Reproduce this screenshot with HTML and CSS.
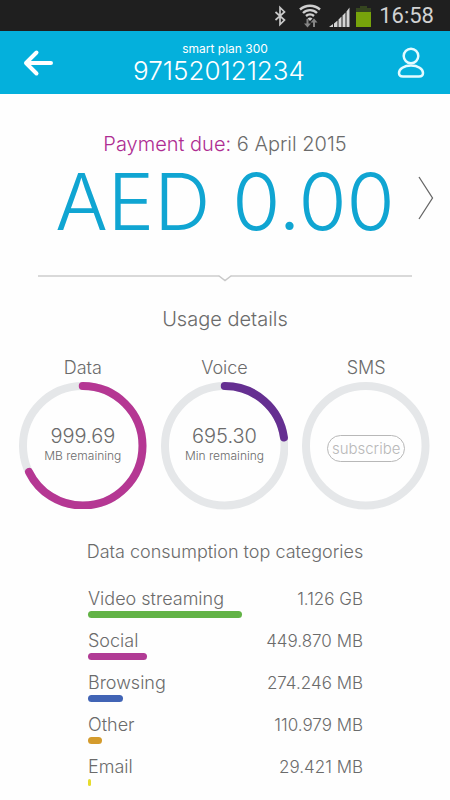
FILE: index.html
```html
<!DOCTYPE html>
<html lang="en">
<head>
<meta charset="utf-8">
<meta name="viewport" content="width=device-width, initial-scale=1">
<title>Account usage</title>
<link rel="stylesheet" href="styles.css">
</head>
<body>
<div class="status">
  <svg class="status-icons" width="102" height="26" viewBox="0 0 102 26" aria-hidden="true">
    <path d="M2.500 9l9 8-4.500 4.500V4.500L11.500 9l-9 8" fill="none" stroke="#c9c9c9" stroke-width="1.700"/>
    <g fill="none" stroke="#cfcfcf" stroke-width="2.400">
      <path d="M27 6.500a15 15 0 0 1 20 0"/>
      <path d="M30 10a10 10 0 0 1 14 0"/>
      <path d="M33 13a6 6 0 0 1 8 0"/>
    </g>
    <path d="M34.500 15.500a4 4 0 0 1 5 0L37 18z" fill="#cfcfcf"/>
    <path d="M34.500 16v6M41 24v-7" stroke="#858585" stroke-width="2"/>
    <path d="M31 20.500h7l-3.500 4zM37.500 19.500h7L41 15.500z" fill="#858585"/>
    <path d="M56 24l4-3v3zM61 20.500l3.500-3V24H61zM65.500 16.500l3-3V24h-3zM69.500 12.500l3-3V24h-3zM73.500 8.500l3-4V24h-3z" fill="#d4d4d4"/>
    <path d="M87 3h7v2h4v5H83V5h4z" fill="#35451f"/>
    <path d="M83 9h15v15H83z" fill="#77a30b"/>
  </svg>
  <time class="clock">16:58</time>
</div>
<header class="bar">
  <button class="icon-button" type="button" aria-label="Back">
    <svg width="30" height="28" viewBox="0 0 30 28" aria-hidden="true"><path d="M3 14h25M13.500 3.500L3 14l10.500 10.500" fill="none" stroke="#fff" stroke-width="4" stroke-linecap="round" stroke-linejoin="round"/></svg>
  </button>
  <div class="account">
    <p class="plan">smart plan 300</p>
    <h1 class="number">971520121234</h1>
  </div>
  <button class="icon-button" type="button" aria-label="Profile">
    <svg width="28" height="32" viewBox="0 0 28 32" fill="none" stroke="#e4fbff" stroke-width="2.500" aria-hidden="true"><circle cx="14" cy="9" r="7.300"/><path d="M14 18.500c-7 0-12 3.500-12 7.500 0 2.500 1 3.500 4 3.500h16c3 0 4-1 4-3.500 0-4-5-7.500-12-7.500z"/></svg>
  </button>
</header>
<main>
  <section class="payment">
    <p class="due"><span class="due-label">Payment due:</span> 6 April 2015</p>
    <div class="amount-row">
      <p class="amount">AED 0.00</p>
      <button class="next" type="button" aria-label="Payment details">
        <svg width="16" height="44" viewBox="0 0 16 44" aria-hidden="true"><path d="M1 1l13.500 21L1 43" fill="none" stroke="#666" stroke-width="1.300"/></svg>
      </button>
    </div>
  </section>
  <div class="divider" aria-hidden="true">
    <span class="rule"></span>
    <svg width="14" height="7" viewBox="0 0 14 7"><path d="M0 1h1l6 4.500L13 1h1" fill="none" stroke="#c9c9c9" stroke-width="1.500"/></svg>
    <span class="rule"></span>
  </div>
  <section>
    <h2 class="usage-title">Usage details</h2>
    <div class="gauges">
      <article class="gauge">
        <h3 class="gauge-title">Data</h3>
        <div class="ring">
          <svg class="ring-art" viewBox="0 0 128 128" aria-hidden="true">
            <circle class="track" cx="64" cy="64" r="60"/>
            <circle class="arc data" cx="64" cy="64" r="60" pathLength="360" stroke-dasharray="244 360"/>
          </svg>
          <div class="reading"><p class="value">999.69</p><p class="unit">MB remaining</p></div>
        </div>
      </article>
      <article class="gauge">
        <h3 class="gauge-title">Voice</h3>
        <div class="ring">
          <svg class="ring-art" viewBox="0 0 128 128" aria-hidden="true">
            <circle class="track" cx="64" cy="64" r="60"/>
            <circle class="arc voice" cx="64" cy="64" r="60" pathLength="360" stroke-dasharray="82 360"/>
          </svg>
          <div class="reading"><p class="value">695.30</p><p class="unit">Min remaining</p></div>
        </div>
      </article>
      <article class="gauge">
        <h3 class="gauge-title">SMS</h3>
        <div class="ring">
          <svg class="ring-art" viewBox="0 0 128 128" aria-hidden="true">
            <circle class="track" cx="64" cy="64" r="60"/>
          </svg>
          <button class="subscribe" type="button">subscribe</button>
        </div>
      </article>
    </div>
  </section>
  <section>
    <h2 class="categories-title">Data consumption top categories</h2>
    <table class="categories">
      <tbody>
        <tr><th scope="row">Video streaming<span class="meter green" style="width:100%"></span></th><td>1.126 GB</td></tr>
        <tr><th scope="row">Social<span class="meter pink" style="width:38%"></span></th><td>449.870 MB</td></tr>
        <tr><th scope="row">Browsing<span class="meter blue" style="width:23%"></span></th><td>274.246 MB</td></tr>
        <tr><th scope="row">Other<span class="meter orange" style="width:9%"></span></th><td>110.979 MB</td></tr>
        <tr><th scope="row">Email<span class="meter yellow" style="width:2%"></span></th><td>29.421 MB</td></tr>
      </tbody>
    </table>
  </section>
</main>
</body>
</html>
```
FILE: styles.css
```css
* { box-sizing: border-box; }

body {
  margin: 0;
  background: #fefefe;
  color: #6b6b6b;
  font-family: Inter, "Open Sans", sans-serif;
  font-weight: 300;
}

h1, h2, h3, p { margin: 0; font-weight: 300; }

button {
  border: 0;
  padding: 0;
  background: none;
  color: inherit;
  font: inherit;
  cursor: pointer;
}

svg { display: block; }

.status {
  display: flex;
  justify-content: flex-end;
  align-items: center;
  gap: 4px;
  height: 31px;
  padding-right: 16px;
  background: #1f1f1f;
}

.clock {
  color: #d2d2d2;
  font: 400 22px/30px Roboto, sans-serif;
}

.bar {
  display: flex;
  justify-content: space-between;
  align-items: center;
  height: 63px;
  padding: 0 25px 0 23px;
  background: #04b0dc;
  color: #fff;
}

.account { text-align: center; }
.plan { font-size: 12px; font-weight: 400; line-height: 16px; }
.number { padding-right: 12px; font-size: 26px; line-height: 28px; }

.payment { padding-top: 36px; }

.due {
  font-size: 20px;
  line-height: 28px;
  text-align: center;
}

.due-label { color: #ae2d92; }

.amount-row {
  display: grid;
  grid-template-columns: 1fr auto;
  align-items: start;
  padding: 0 16px 0 32px;
}

.amount {
  color: #10a5d2;
  font-size: 78px;
  line-height: 87px;
  text-align: center;
  white-space: nowrap;
}

.next { margin-top: 18px; }

.divider {
  display: flex;
  align-items: flex-start;
  margin: 30px 38px 0;
}

.rule { flex: 1; height: 2px; background: #d9d9d9; }

.usage-title {
  margin-top: 23px;
  font-size: 20px;
  line-height: 28px;
  text-align: center;
}

.gauges {
  display: grid;
  grid-template-columns: repeat(3, 1fr);
  margin-top: 22px;
  padding: 0 13px 0 12px;
}

.gauge { display: flex; flex-direction: column; align-items: center; }
.gauge-title { font-size: 18px; line-height: 26px; }

.ring {
  display: grid;
  place-items: center;
  width: 90%;
  margin-top: 1px;
}

.ring > * { grid-area: 1 / 1; }
.ring-art { width: 100%; }
.track, .arc { fill: none; stroke: #e5e7e9; stroke-width: 8; }
.arc { stroke-linecap: round; transform: rotate(-90deg); transform-origin: center; }
.arc.data { stroke: #b53793; }
.arc.voice { stroke: #652f91; }

.reading { padding-bottom: 2px; text-align: center; }
.value { font-size: 20px; line-height: 22px; }
.unit { font-size: 12px; line-height: 18px; }

.subscribe {
  margin-top: 6px;
  padding: 0 4px;
  border: 1px solid #b8b8b8;
  border-radius: 14px;
  color: #b8b8b8;
  font-size: 15px;
  line-height: 25px;
}

.categories-title {
  margin-top: 30px;
  font-size: 18px;
  line-height: 24px;
  text-align: center;
}

.categories {
  width: calc(100% - 175px);
  margin: 23px 87px 0 88px;
  border-collapse: collapse;
  table-layout: fixed;
  font-size: 18px;
  line-height: 24px;
}

.categories th, .categories td {
  height: 42px;
  padding: 0;
  vertical-align: top;
  font-weight: 300;
  white-space: nowrap;
}

.categories th { width: 56%; text-align: left; }
.categories td { font-size: 17px; text-align: right; }

.meter { display: block; height: 7px; border-radius: 4px; }
.green { background: #62b346; }
.pink { background: #b13b95; }
.blue { background: #4164b5; }
.orange { background: #d49b2c; }
.yellow { background: #e6dc2e; }
```
